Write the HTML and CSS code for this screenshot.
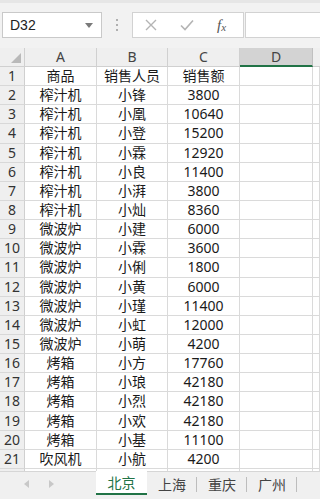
FILE: index.html
```html
<!DOCTYPE html>
<html lang="zh">
<head>
<meta charset="utf-8">
<link rel="stylesheet" href="styles.css">
</head>
<body>
<div class="app">
  <div class="fbar">
    <div class="namebox"><span class="ref">D32</span><span class="dd"></span></div>
    <div class="dots"><i></i><i></i><i></i></div>
    <div class="btns">
      <svg class="ic x" width="12" height="12" viewBox="0 0 12 12"><path d="M1 1L11 11M11 1L1 11" stroke="#b4b4b4" stroke-width="1.4" fill="none"/></svg>
      <svg class="ic ok" width="14" height="12" viewBox="0 0 14 12"><path d="M1 6.5L5 10.5L13 1.5" stroke="#b4b4b4" stroke-width="1.6" fill="none"/></svg>
      <span class="fx">f<sub>x</sub></span>
    </div>
    <div class="input"></div>
  </div>
  <div class="sheet">
    <div class="row head">
      <div class="corner"><span class="tri"></span></div>
      <div class="ch">A</div><div class="ch">B</div><div class="ch">C</div><div class="ch sel">D</div><div class="ch e"></div>
    </div>
    <div class="row"><div class="rh">1</div><div class="c">商品</div><div class="c">销售人员</div><div class="c">销售额</div><div class="c"></div><div class="c"></div></div>
    <div class="row"><div class="rh">2</div><div class="c">榨汁机</div><div class="c">小锋</div><div class="c">3800</div><div class="c"></div><div class="c"></div></div>
    <div class="row"><div class="rh">3</div><div class="c">榨汁机</div><div class="c">小凰</div><div class="c">10640</div><div class="c"></div><div class="c"></div></div>
    <div class="row"><div class="rh">4</div><div class="c">榨汁机</div><div class="c">小登</div><div class="c">15200</div><div class="c"></div><div class="c"></div></div>
    <div class="row"><div class="rh">5</div><div class="c">榨汁机</div><div class="c">小霖</div><div class="c">12920</div><div class="c"></div><div class="c"></div></div>
    <div class="row"><div class="rh">6</div><div class="c">榨汁机</div><div class="c">小良</div><div class="c">11400</div><div class="c"></div><div class="c"></div></div>
    <div class="row"><div class="rh">7</div><div class="c">榨汁机</div><div class="c">小湃</div><div class="c">3800</div><div class="c"></div><div class="c"></div></div>
    <div class="row"><div class="rh">8</div><div class="c">榨汁机</div><div class="c">小灿</div><div class="c">8360</div><div class="c"></div><div class="c"></div></div>
    <div class="row"><div class="rh">9</div><div class="c">微波炉</div><div class="c">小建</div><div class="c">6000</div><div class="c"></div><div class="c"></div></div>
    <div class="row"><div class="rh">10</div><div class="c">微波炉</div><div class="c">小霖</div><div class="c">3600</div><div class="c"></div><div class="c"></div></div>
    <div class="row"><div class="rh">11</div><div class="c">微波炉</div><div class="c">小俐</div><div class="c">1800</div><div class="c"></div><div class="c"></div></div>
    <div class="row"><div class="rh">12</div><div class="c">微波炉</div><div class="c">小黄</div><div class="c">6000</div><div class="c"></div><div class="c"></div></div>
    <div class="row"><div class="rh">13</div><div class="c">微波炉</div><div class="c">小瑾</div><div class="c">11400</div><div class="c"></div><div class="c"></div></div>
    <div class="row"><div class="rh">14</div><div class="c">微波炉</div><div class="c">小虹</div><div class="c">12000</div><div class="c"></div><div class="c"></div></div>
    <div class="row"><div class="rh">15</div><div class="c">微波炉</div><div class="c">小萌</div><div class="c">4200</div><div class="c"></div><div class="c"></div></div>
    <div class="row"><div class="rh">16</div><div class="c">烤箱</div><div class="c">小方</div><div class="c">17760</div><div class="c"></div><div class="c"></div></div>
    <div class="row"><div class="rh">17</div><div class="c">烤箱</div><div class="c">小琅</div><div class="c">42180</div><div class="c"></div><div class="c"></div></div>
    <div class="row"><div class="rh">18</div><div class="c">烤箱</div><div class="c">小烈</div><div class="c">42180</div><div class="c"></div><div class="c"></div></div>
    <div class="row"><div class="rh">19</div><div class="c">烤箱</div><div class="c">小欢</div><div class="c">42180</div><div class="c"></div><div class="c"></div></div>
    <div class="row"><div class="rh">20</div><div class="c">烤箱</div><div class="c">小基</div><div class="c">11100</div><div class="c"></div><div class="c"></div></div>
    <div class="row"><div class="rh">21</div><div class="c">吹风机</div><div class="c">小航</div><div class="c">4200</div><div class="c"></div><div class="c"></div></div>
    <div class="row"><div class="rh"></div><div class="c"></div><div class="c"></div><div class="c"></div><div class="c"></div><div class="c"></div></div>
  </div>
  <div class="tabs">
    <div class="nav">
      <span class="arr l"></span><span class="arr r"></span>
    </div>
    <div class="tab active">北京</div>
    <div class="tab">上海</div>
    <div class="tab">重庆</div>
    <div class="tab">广州</div>
  </div>
</div>
</body>
</html>
```

FILE: styles.css
```css
* { box-sizing: border-box; }
html, body { margin: 0; padding: 0; }
body {
  width: 320px;
  height: 499px;
  overflow: hidden;
  background: #f3f3f3;
  font-family: "Noto Sans", "Noto Sans CJK SC", sans-serif;
  color: #222;
}
.app { width: 320px; height: 499px; display: flex; flex-direction: column; }

.fbar {
  height: 48px;
  flex: none;
  display: flex;
  align-items: flex-start;
  padding-left: 2px;
  background: #f2f2f2;
  border-top: 3px solid #e6e6e6;
  padding-top: 9px;
}
.namebox {
  width: 100px;
  height: 26px;
  background: #fff;
  border: 1px solid #c9c9c9;
  display: flex;
  align-items: center;
  justify-content: space-between;
  padding: 0 6px 0 7px;
}
.ref { font-size: 14px; color: #222; font-family: "Liberation Sans", "Noto Sans", sans-serif; }
.dd {
  width: 0; height: 0;
  border-left: 4px solid transparent;
  border-right: 4px solid transparent;
  border-top: 5px solid #7a7a7a;
  margin-right: 2px;
}
.dots {
  width: 30px;
  height: 26px;
  display: flex;
  flex-direction: column;
  align-items: center;
  justify-content: center;
  gap: 3px;
}
.dots i { display: block; width: 2px; height: 2px; background: #b0b0b0; }
.btns {
  width: 112px;
  height: 26px;
  background: #fff;
  border: 1px solid #d2d2d2;
  display: flex;
  align-items: center;
  padding-left: 12px;
}
.ic { display: block; }
.ic.ok { margin-left: 23px; }
.fx {
  margin-left: 23px;
  font-family: "Liberation Serif", serif;
  font-style: italic;
  font-size: 15px;
  color: #555;
  line-height: 1;
}
.fx sub { font-size: 11px; vertical-align: -1px; }
.input {
  flex: 1;
  height: 26px;
  margin-left: 1px;
  background: #fff;
  border: 1px solid #d2d2d2;
  border-right: none;
}

.sheet {
  height: 423px;
  flex: none;
  overflow: hidden;
  background: #fff;
}
.row {
  display: grid;
  grid-template-columns: 25px 72px 71px 72px 73px 7px;
  height: 19.15px;
}
.row.head { height: 19px; background: #efefef; }
.corner {
  background: #efefef;
  border-right: 1px solid #d0d0d0;
  border-bottom: 1px solid #d0d0d0;
  position: relative;
}
.tri {
  position: absolute;
  right: 3px;
  bottom: 3px;
  width: 0; height: 0;
  border-left: 10px solid transparent;
  border-bottom: 10px solid #b9b9b9;
}
.ch {
  background: #efefef;
  border-right: 1px solid #d0d0d0;
  border-bottom: 1px solid #d0d0d0;
  text-align: center;
  font-size: 14px;
  line-height: 18px;
  color: #444;
  font-family: "Noto Sans", sans-serif;
}
.ch.sel {
  background: #d3d3d3;
  border-bottom: 2px solid #217346;
  border-right-color: #c0c0c0;
  line-height: 17px;
}
.ch.e { border-right: none; }
.rh {
  background: #efefef;
  border-right: 1px solid #d0d0d0;
  border-bottom: 1px solid #d8d8d8;
  text-align: center;
  font-size: 14px;
  line-height: 18px;
  color: #333;
  font-family: "Noto Sans", sans-serif;
}
.c {
  border-right: 1px solid #dadada;
  border-bottom: 1px solid #dadada;
  text-align: center;
  font-size: 14px;
  line-height: 18px;
  color: #1a1a1a;
  white-space: nowrap;
  overflow: hidden;
}

.tabs {
  flex: 1;
  display: flex;
  align-items: stretch;
  background: #f0f0f0;
  border-top: 1px solid #d6d6d6;
  padding-bottom: 4px;
}
.nav {
  width: 96px;
  display: flex;
  align-items: center;
  padding-left: 24px;
  gap: 20px;
}
.arr { width: 0; height: 0; border-top: 4px solid transparent; border-bottom: 4px solid transparent; }
.arr.l { border-right: 5px solid #c8c8c8; }
.arr.r { border-left: 5px solid #c8c8c8; }
.tab {
  width: 50px;
  display: flex;
  align-items: center;
  justify-content: center;
  font-size: 14px;
  color: #444;
  position: relative;
}
.tab::after {
  content: "";
  position: absolute;
  right: 0;
  top: 5px;
  bottom: 3px;
  border-right: 1px solid #bdbdbd;
}
.tab.active {
  width: 51px;
  background: #fff;
  color: #217346;
  border-bottom: 2px solid #217346;
  margin-top: -1px;
}
.tab.active::after { display: none; }
```
